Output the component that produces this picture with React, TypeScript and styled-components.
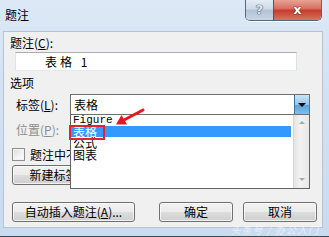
import React from 'react';
import styled, { createGlobalStyle } from 'styled-components';

const GlobalStyle = createGlobalStyle`
  html, body {
    margin: 0;
    padding: 0;
    background: #ffffff;
  }
  body {
    font-family: 'Noto Sans CJK SC', 'Noto Sans', sans-serif;
    font-size: 12px;
    color: #000;
  }
`;

const Window = styled.div`
  position: relative;
  width: 329px;
  height: 237px;
  box-sizing: border-box;
  display: flex;
  flex-direction: column;
  background: linear-gradient(180deg, #dce8f5 0%, #d2e2f3 40%, #c8dbef 100%);
  border-bottom: 1px solid #3e4a58;
  overflow: hidden;
`;

const TitleBar = styled.div`
  height: 31px;
  display: flex;
  align-items: flex-start;
  justify-content: space-between;
  padding-left: 5px;
  padding-right: 7px;
`;

const Title = styled.div`
  margin-top: 8px;
  font-size: 12px;
  line-height: 14px;
  color: #000;
`;

const CaptionButtons = styled.div`
  display: flex;
  margin-top: -1px;
  border: 1px solid #56687e;
  border-top: none;
  border-radius: 0 0 5px 5px;
  overflow: hidden;
  box-shadow: 0 1px 0 rgba(255, 255, 255, 0.8);
`;

const CapBtn = styled.div<{ $kind: 'help' | 'close' }>`
  height: 21px;
  width: ${p => (p.$kind === 'help' ? '27px' : '47px')};
  display: flex;
  align-items: center;
  justify-content: center;
  font-family: 'DejaVu Sans', sans-serif;
  font-weight: bold;
  font-size: ${p => (p.$kind === 'help' ? '13px' : '13px')};
  color: ${p => (p.$kind === 'help' ? '#dfe6ee' : '#ffffff')};
  text-shadow: ${p =>
    p.$kind === 'help'
      ? '0 0 1px #4b5a6c, 0 0 1px #4b5a6c, 0 0 1px #4b5a6c'
      : '0 0 1px #5a1a14, 0 0 1px #5a1a14, 0 0 1px #5a1a14'};
  background: ${p =>
    p.$kind === 'help'
      ? 'linear-gradient(180deg, #e6eef7 0%, #cfdbe8 45%, #b3c3d6 55%, #c7d5e5 100%)'
      : 'linear-gradient(180deg, #e9a99c 0%, #d8705f 45%, #c43c2c 55%, #d9735e 100%)'};
  border-left: ${p => (p.$kind === 'close' ? '1px solid #6b4a50' : 'none')};
`;

const Body = styled.div`
  position: relative;
  margin: 0 6px 8px 3px;
  flex: 1;
  background: #f0f0f0;
  border: 1px solid #b4c4d6;
  padding: 4px 5px 0 6px;
  display: flex;
  flex-direction: column;
`;

const Label = styled.div`
  line-height: 14px;
  height: 14px;
  u {
    text-decoration: underline;
  }
`;

const CaptionInput = styled.div`
  margin: 2px 0 0 5px;
  width: 282px;
  height: 19px;
  box-sizing: border-box;
  background: #fff;
  border: 1px solid #abadb3;
  border-color: #abadb3 #dbdfe6 #e3e9ef #e2e3ea;
  padding-left: 29px;
  line-height: 17px;
  letter-spacing: 3px;
`;

const Section = styled(Label)`
  margin-top: 5px;
`;

const Options = styled.div`
  display: flex;
  flex-direction: column;
  margin-top: 4px;
`;

const FieldRow = styled.div<{ $disabled?: boolean }>`
  display: flex;
  align-items: center;
  height: 21px;
  margin-bottom: 4px;
  color: ${p => (p.$disabled ? '#8d8d8d' : '#000')};
`;

const FieldLabel = styled.div`
  width: 60px;
  padding-left: 6px;
  box-sizing: border-box;
  line-height: 14px;
`;

const ComboWrap = styled.div`
  position: relative;
  width: 240px;
  height: 21px;
`;

const Combo = styled.div`
  height: 21px;
  box-sizing: border-box;
  background: #fff;
  border: 1px solid #6e6e6e;
  display: flex;
  align-items: stretch;
  justify-content: space-between;
  padding-left: 3px;
  line-height: 19px;
`;

const DropButton = styled.div`
  width: 14px;
  background: linear-gradient(180deg, #c9e5f8 0%, #93c6ec 50%, #5aa2d8 51%, #82bde6 100%);
  border-left: 1px solid #3c6f99;
  display: flex;
  align-items: center;
  justify-content: center;
`;

const DownTri = styled.div`
  width: 0;
  height: 0;
  border-left: 4px solid transparent;
  border-right: 4px solid transparent;
  border-top: 4px solid #000;
`;

const ListPopup = styled.div`
  position: absolute;
  left: 0;
  top: 21px;
  width: 240px;
  height: 74px;
  box-sizing: border-box;
  background: #fff;
  border: 1px solid #646464;
  border-top: none;
  display: flex;
  z-index: 2;
`;

const Items = styled.div`
  position: relative;
  flex: 1;
`;

const Item = styled.div<{ $selected?: boolean; $latin?: boolean }>`
  height: 11px;
  line-height: 11px;
  padding-left: 2px;
  margin-right: 2px;
  white-space: nowrap;
  font-family: ${p =>
    p.$latin ? "'Liberation Mono', monospace" : "'Noto Sans CJK SC', sans-serif"};
  font-size: ${p => (p.$latin ? '11px' : '12px')};
  color: ${p => (p.$selected ? '#fff' : '#000')};
  background: ${p => (p.$selected ? '#3399ff' : 'transparent')};
`;

const ItemGap = styled.div`
  height: 1px;
`;

const Highlight = styled.div`
  position: absolute;
  left: -2px;
  top: 10px;
  width: 36px;
  height: 15px;
  box-sizing: border-box;
  border: 2px solid #e1232b;
`;

const ScrollBar = styled.div`
  width: 16px;
  background: linear-gradient(90deg, #e4e4e4 0%, #f2f2f2 40%, #e8e8e8 100%);
  border-left: 1px solid #d6d6d6;
  display: flex;
  flex-direction: column;
  justify-content: space-between;
  align-items: center;
  padding: 6px 0 7px;
  box-sizing: border-box;
`;

const ScrollArrow = styled.div<{ $dir: 'up' | 'down' }>`
  width: 0;
  height: 0;
  border-left: 3px solid transparent;
  border-right: 3px solid transparent;
  ${p =>
    p.$dir === 'up' ? 'border-bottom: 3px solid #a8a8a8;' : 'border-top: 3px solid #a8a8a8;'}
`;

const CheckRow = styled.div`
  display: flex;
  align-items: center;
  gap: 5px;
  margin: 4px 0 0 2px;
  height: 13px;
  line-height: 14px;
`;

const CheckBox = styled.div`
  width: 13px;
  height: 13px;
  box-sizing: border-box;
  border: 1px solid #8e8f8f;
  background: linear-gradient(135deg, #dcdcdc 0%, #f4f4f4 60%, #ffffff 100%);
  box-shadow: inset 0 0 0 1px #f4f4f4;
`;

const ButtonRow = styled.div`
  display: flex;
  margin: 4px 0 0 2px;
`;

const Button = styled.div<{ $w: number }>`
  width: ${p => p.$w}px;
  height: 20px;
  box-sizing: border-box;
  border: 1px solid #707070;
  border-radius: 3px;
  background: linear-gradient(180deg, #f2f2f2 0%, #ebebeb 50%, #dddddd 51%, #cfcfcf 100%);
  box-shadow: inset 0 0 0 1px rgba(255, 255, 255, 0.7);
  display: flex;
  align-items: center;
  justify-content: center;
  line-height: 14px;
  white-space: nowrap;
  overflow: hidden;
`;

const Footer = styled.div`
  display: flex;
  align-items: center;
  margin: auto 0 5px 2px;
  gap: 10px;
`;

const Spacer = styled.div`
  flex: 1;
`;

const Arrow = styled.svg`
  position: absolute;
  left: 108px;
  top: 75px;
  z-index: 3;
`;

const Watermark = styled.div`
  position: absolute;
  right: 10px;
  bottom: 0;
  font-size: 10px;
  line-height: 13px;
  color: rgba(255, 255, 255, 0.6);
  letter-spacing: 1px;
  font-style: italic;
`;

export default function App() {
  return (
    <>
      <GlobalStyle />
      <Window>
        <TitleBar>
          <Title>题注</Title>
          <CaptionButtons>
            <CapBtn $kind="help">?</CapBtn>
            <CapBtn $kind="close">x</CapBtn>
          </CaptionButtons>
        </TitleBar>
        <Body>
          <Label>
            题注(<u>C</u>):
          </Label>
          <CaptionInput>表格 1</CaptionInput>
          <Section>选项</Section>
          <Options>
            <FieldRow>
              <FieldLabel>
                标签(<u>L</u>):
              </FieldLabel>
              <ComboWrap>
                <Combo>
                  <span>表格</span>
                  <DropButton>
                    <DownTri />
                  </DropButton>
                </Combo>
                <ListPopup>
                  <Items>
                    <Item $latin>Figure</Item>
                    <Item $selected>表格</Item>
                    <Item>公式</Item>
                    <ItemGap />
                    <Item>图表</Item>
                    <Highlight />
                  </Items>
                  <ScrollBar>
                    <ScrollArrow $dir="up" />
                    <ScrollArrow $dir="down" />
                  </ScrollBar>
                </ListPopup>
              </ComboWrap>
            </FieldRow>
            <FieldRow $disabled>
              <FieldLabel>
                位置(<u>P</u>):
              </FieldLabel>
            </FieldRow>
            <CheckRow>
              <CheckBox />
              <span>题注中不包含标签(E)</span>
            </CheckRow>
            <ButtonRow>
              <Button $w={110}>新建标签(N)...</Button>
            </ButtonRow>
          </Options>
          <Footer>
            <Button $w={123}>
              自动插入题注(<u>A</u>)...
            </Button>
            <Spacer />
            <Button $w={74}>确定</Button>
            <Button $w={74}>取消</Button>
          </Footer>
          <Arrow width="36" height="24" viewBox="0 0 36 24">
            <line x1="31" y1="3" x2="12" y2="13" stroke="#e8171e" strokeWidth="3" strokeLinecap="round" />
            <polygon points="4,17.5 15,17.5 9.5,8" fill="#e8171e" />
          </Arrow>
        </Body>
        <Watermark>头条号 / 办公入门</Watermark>
      </Window>
    </>
  );
}
